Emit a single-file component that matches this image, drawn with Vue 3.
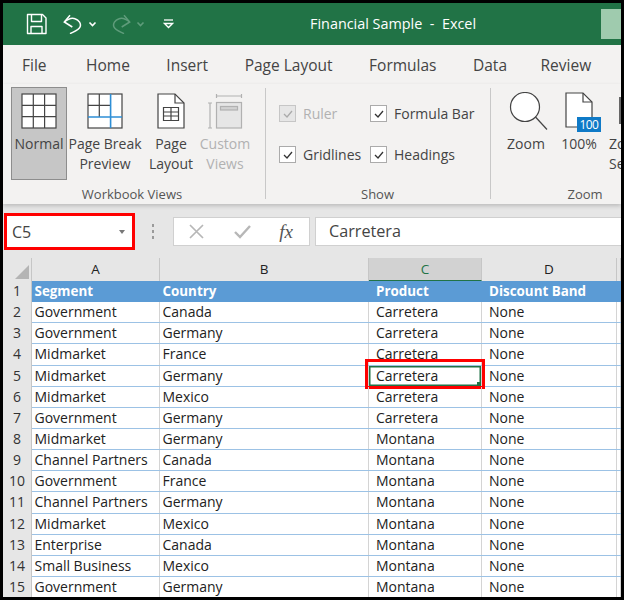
<template>
  <div class="frame">
    <div class="window">
      <header class="titlebar">
        <div class="qat">
          <svg class="ic-save" width="22" height="22" viewBox="0 0 22 22" fill="none" stroke="#fff" stroke-width="1.4" stroke-linejoin="round">
            <path d="M1.500 1.500h15l3.500 3.500v15.500h-18.500z" />
            <path d="M5.500 1.500v7h10v-7" />
            <path d="M5 20.500v-7h11v7" />
          </svg>
          <svg class="ic-undo" width="20" height="20" viewBox="0 0 20 20" fill="none" stroke="#fff" stroke-width="1.5">
            <path d="M1.300 8C5 5 9 3.500 12 4.700C16 6 18.500 10 17 13C16 16 10 18 7 19.700" />
            <path d="M7 1.300L1.300 8L9.300 13" />
          </svg>
          <svg class="chev" width="9" height="6" viewBox="0 0 9 6" fill="none" stroke="#fff" stroke-width="1.600"><path d="M1.500 1.500l3 3 3-3" /></svg>
          <svg class="ic-redo" width="20" height="20" viewBox="0 0 20 20" fill="none" stroke="#5f9c7b" stroke-width="1.5">
            <path d="M18.700 8C15 5 11 3.500 8 4.700C4 6 1.500 10 3 13C4 16 10 18 13 19.700" />
            <path d="M13 1.300L18.700 8L10.700 13" />
          </svg>
          <svg class="chev" width="9" height="6" viewBox="0 0 9 6" fill="none" stroke="#5f9c7b" stroke-width="1.600"><path d="M1.500 1.500l3 3 3-3" /></svg>
          <svg class="ic-custom" width="11" height="10" viewBox="0 0 11 10" fill="none" stroke="#fff" stroke-width="1.300">
            <path d="M1 1h9" />
            <path d="M1.500 4.500l4 4 4-4z" />
          </svg>
        </div>
        <div class="doc-title">Financial Sample&nbsp; -&nbsp; Excel</div>
        <div class="avatar"></div>
      </header>

      <nav class="tabs">
        <span v-for="tab in tabs" :key="tab">{{ tab }}</span>
      </nav>

      <section class="ribbon">
        <div class="group group-views">
          <div class="group-body">
            <div class="view-btn pressed w-normal">
              <svg width="36" height="36" viewBox="0 0 36 36" fill="#fff" stroke="#444" stroke-width="1.200">
                <rect x="1" y="1" width="34" height="34" />
                <path d="M12.300 1v34M23.600 1v34M1 12.300h34M1 23.600h34" fill="none" />
              </svg>
              <span>Normal</span>
            </div>
            <div class="view-btn w-break">
              <svg width="36" height="36" viewBox="0 0 36 36" fill="#fff" stroke="#444" stroke-width="1.200">
                <rect x="1" y="1" width="34" height="34" />
                <path d="M12.300 1v23M1 12.300h23" fill="none" />
                <path d="M23.600 1v34M1 24h34" fill="none" stroke="#2e8fd6" stroke-width="1.600" />
              </svg>
              <span>Page Break<br />Preview</span>
            </div>
            <div class="view-btn w-layout">
              <svg width="28" height="36" viewBox="0 0 28 36" fill="#fff" stroke="#444" stroke-width="1.200">
                <path d="M1 1h17l9 9v25H1z" />
                <path d="M18 1v9h9" fill="none" />
                <path d="M6.500 14.500h15v13h-15zM6.500 19h15M6.500 23h15M14 14.500v13" fill="none" />
              </svg>
              <span>Page<br />Layout</span>
            </div>
            <div class="view-btn disabled w-custom">
              <svg width="36" height="36" viewBox="0 0 36 36" fill="none" stroke="#b1b1b1" stroke-width="1.200">
                <path d="M9.500 3h25M9.500 1v4M34.500 1v4" />
                <path d="M1 10h4M3 10v25M1 35h4" />
                <rect x="9.500" y="9.500" width="25" height="25.500" fill="#e6e6e6" />
                <rect x="13.500" y="13.500" width="17" height="3.500" fill="#d2d2d2" />
              </svg>
              <span>Custom<br />Views</span>
            </div>
          </div>
          <div class="group-label">Workbook Views</div>
        </div>

        <div class="group group-show">
          <div class="show-grid">
            <label v-for="opt in showOptions" :key="opt.label" class="check" :class="{ disabled: opt.disabled }">
              <span class="box">
                <svg width="10" height="8" viewBox="0 0 10 8" fill="none" stroke="currentColor" stroke-width="1.300"><path d="M1 4l3 3 5-6" /></svg>
              </span>
              {{ opt.label }}
            </label>
          </div>
          <div class="group-label">Show</div>
        </div>

        <div class="group group-zoom">
          <div class="group-body">
            <div class="view-btn w-zoom">
              <svg width="40" height="40" viewBox="0 0 40 40" fill="none" stroke="#444" stroke-width="1.200">
                <circle cx="17" cy="15" r="14.500" fill="#fff" />
                <path d="M27.500 25L39 37.500" />
              </svg>
              <span>Zoom</span>
            </div>
            <div class="view-btn w-hundred">
              <div class="page-icon">
                <svg width="28" height="36" viewBox="0 0 28 36" fill="#fff" stroke="#444" stroke-width="1.200">
                  <path d="M1 1h17l9 9v25H1z" />
                  <path d="M18 1v9h9" fill="none" />
                </svg>
                <span class="badge">100</span>
              </div>
              <span>100%</span>
            </div>
            <div class="view-btn w-sel">
              <div class="sel-icon"></div>
              <span>Zoom to<br />Selection</span>
            </div>
          </div>
          <div class="group-label">Zoom</div>
        </div>
      </section>

      <section class="formula-row">
        <div class="name-box">
          <span>C5</span>
          <i class="caret"></i>
        </div>
        <div class="grip"><i></i><i></i><i></i></div>
        <div class="fx-buttons">
          <svg width="17" height="17" viewBox="0 0 17 17" fill="none" stroke="#b7b7b7" stroke-width="1.700"><path d="M2 2l13 13M15 2L2 15" /></svg>
          <svg width="17" height="14" viewBox="0 0 17 14" fill="none" stroke="#b7b7b7" stroke-width="2.400"><path d="M1 7l5 5L16 1" /></svg>
          <span class="fx">fx</span>
        </div>
        <div class="formula-input">Carretera</div>
      </section>

      <section class="sheet">
        <div class="row heads">
          <div class="corner"><i></i></div>
          <div v-for="col in columns" :key="col" class="col-head" :class="{ current: col === 'C' }">{{ col }}</div>
          <div class="col-head"></div>
        </div>
        <div
          v-for="(row, i) in rows"
          :key="i"
          class="row"
          :class="{ first: i === 0 }"
        >
          <div class="row-head">{{ i + 1 }}</div>
          <div v-for="(cell, j) in row" :key="j" class="cell" :class="{ selected: i === 4 && j === 2, indent: j > 1 }">
            {{ cell }}
            <template v-if="i === 4 && j === 2">
              <i class="handle"></i>
              <i class="red-mark"></i>
            </template>
          </div>
          <div class="cell"></div>
        </div>
      </section>
    </div>
  </div>
</template>

<script setup>
const tabs = ["File", "Home", "Insert", "Page Layout", "Formulas", "Data", "Review"];
const columns = ["A", "B", "C", "D"];

const showOptions = [
  { label: "Ruler", disabled: true },
  { label: "Gridlines" },
  { label: "Formula Bar" },
  { label: "Headings" },
];

const rows = [
  ["Segment", "Country", "Product", "Discount Band"],
  ["Government", "Canada", "Carretera", "None"],
  ["Government", "Germany", "Carretera", "None"],
  ["Midmarket", "France", "Carretera", "None"],
  ["Midmarket", "Germany", "Carretera", "None"],
  ["Midmarket", "Mexico", "Carretera", "None"],
  ["Government", "Germany", "Carretera", "None"],
  ["Midmarket", "Germany", "Montana", "None"],
  ["Channel Partners", "Canada", "Montana", "None"],
  ["Government", "France", "Montana", "None"],
  ["Channel Partners", "Germany", "Montana", "None"],
  ["Midmarket", "Mexico", "Montana", "None"],
  ["Enterprise", "Canada", "Montana", "None"],
  ["Small Business", "Mexico", "Montana", "None"],
  ["Government", "Germany", "Montana", "None"],
];
</script>

<style>
html,
body {
  margin: 0;
  background: #000;
}
</style>

<style scoped>
.frame {
  width: 624px;
  height: 600px;
  box-sizing: border-box;
  padding: 3px;
  background: #000;
  overflow: hidden;
  font-family: "Open Sans", "Noto Sans", sans-serif;
  color: #444;
}

.window {
  height: 100%;
  background: #e6e6e6;
  overflow: hidden;
  display: flex;
  flex-direction: column;
}

.titlebar {
  height: 42px;
  flex: none;
  background: #217346;
  display: flex;
  align-items: center;
  color: #fff;
  box-sizing: border-box;
}

.qat {
  width: 307px;
  flex: none;
  display: flex;
  align-items: center;
  padding-left: 23px;
  box-sizing: border-box;
}

.ic-save {
  margin-right: 15px;
}

.chev {
  margin-left: 4.500px;
  margin-right: 14.500px;
}

.ic-custom {
  margin-left: 3.500px;
}

.doc-title {
  flex: 1;
  font-size: 14.400px;
  white-space: nowrap;
  margin-top: -2px;
}

.avatar {
  width: 20px;
  height: 30px;
  background: #9fcbae;
}

.tabs {
  height: 39px;
  flex: none;
  background: #f3f2f1;
  display: flex;
  align-items: center;
  gap: 36.500px;
  padding-left: 19px;
  font-size: 15.500px;
  color: #444;
  white-space: nowrap;
}

.tabs span:first-child {
  margin-right: 3px;
}

.tabs span:last-child {
  margin-left: -3px;
}

.ribbon {
  height: 120px;
  flex: none;
  background: #f3f2f1;
  display: flex;
  box-shadow: 0 2px 4px rgba(0, 0, 0, 0.18);
  position: relative;
  overflow: hidden;
}

.group {
  flex: none;
  display: flex;
  flex-direction: column;
  box-sizing: border-box;
  margin-bottom: 5px;
}

.group + .group {
  border-left: 1px solid #c8c8c8;
  margin-top: 4px;
}

.group-views {
  width: 262px;
  padding-left: 8px;
}

.group-show {
  width: 225px;
  padding-left: 13px;
}

.group-zoom {
  flex: 1;
  min-width: 0;
  padding-left: 10px;
}

.group-body {
  flex: 1;
  display: flex;
  align-items: flex-start;
  padding-top: 3px;
}

.group-label {
  height: 10px;
  line-height: 10px;
  text-align: center;
  font-size: 13px;
  color: #555;
  white-space: nowrap;
}

.group-views .group-label {
  padding-right: 12px;
}

.group-show .group-label {
  padding-right: 14px;
}

.group-zoom .group-label {
  padding-left: 48px;
}

.view-btn {
  display: flex;
  flex-direction: column;
  align-items: center;
  flex: none;
  box-sizing: border-box;
  height: 93px;
  padding-top: 6px;
  font-size: 14px;
  line-height: 20px;
  text-align: center;
  white-space: nowrap;
  color: #444;
}

.view-btn > span {
  margin-top: 5px;
}

.view-btn.pressed {
  background: #c6c6c6;
  border: 1px solid #8d8d8d;
  padding-top: 5px;
}

.view-btn.disabled {
  color: #b1b1b1;
}

.w-normal {
  width: 56px;
}

.w-break {
  width: 76px;
}

.w-layout {
  width: 56px;
}

.w-custom {
  width: 52px;
}

.show-grid {
  flex: 1;
  display: grid;
  grid-template-columns: 91px auto;
  grid-template-rows: 41px 41px;
  grid-auto-flow: column;
  align-items: center;
  padding-top: 5px;
  font-size: 14px;
  white-space: nowrap;
}

.check {
  display: flex;
  align-items: center;
  gap: 7px;
}

.check.disabled {
  color: #b1b1b1;
}

.box {
  width: 15px;
  height: 15px;
  background: #fff;
  border: 1px solid #ababab;
  display: flex;
  align-items: center;
  justify-content: center;
  color: #333;
}

.check.disabled .box {
  background: #e6e6e6;
  border-color: #c6c6c6;
  color: #aaa;
}

.group-zoom .group-body {
  padding-top: 0;
}

.group-zoom .view-btn {
  padding-top: 4px;
}

.w-zoom {
  width: 50px;
  margin-right: 3px;
}

.w-zoom svg {
  margin-left: 3px;
}

.w-hundred {
  width: 50px;
}

.w-sel {
  width: 60px;
  margin-left: 5px;
  align-items: flex-start;
  text-align: left;
}

.page-icon {
  position: relative;
  height: 40px;
  width: 36px;
  margin-left: 8px;
}

.page-icon svg {
  display: block;
}

.w-zoom span,
.w-hundred > span,
.w-sel > span {
  margin-top: 2px;
}

.badge {
  position: absolute;
  right: 0;
  bottom: 0;
  width: 24px;
  height: 15px;
  background: #0f7ac7;
  color: #fff;
  font-size: 12px;
  line-height: 15px;
  text-align: center;
  letter-spacing: -0.6px;
}

.sel-icon {
  width: 30px;
  height: 27px;
  margin-top: 5px;
  margin-bottom: 8px;
  margin-left: 10px;
  border-left: 3px solid #666;
}

.formula-row {
  flex: none;
  height: 54px;
  display: flex;
  align-items: center;
  padding-top: 4px;
  padding-bottom: 3px;
  box-sizing: border-box;
}

.name-box {
  width: 131px;
  height: 37px;
  flex: none;
  margin-left: 1px;
  box-sizing: border-box;
  border: 3px solid #f00;
  background: #fff;
  display: flex;
  align-items: center;
  justify-content: space-between;
  padding: 0 7px 0 5px;
  font-size: 16px;
  color: #444;
}

.caret {
  width: 0;
  height: 0;
  border-left: 3.500px solid transparent;
  border-right: 3.500px solid transparent;
  border-top: 4px solid #777;
}

.grip {
  width: 36px;
  margin-right: 2px;
  flex: none;
  display: flex;
  flex-direction: column;
  align-items: center;
  gap: 3px;
}

.grip i {
  width: 2px;
  height: 3px;
  background: #9a9a9a;
}

.fx-buttons {
  width: 137px;
  height: 29px;
  flex: none;
  box-sizing: border-box;
  background: #fff;
  border: 1px solid #d0d0d0;
  display: flex;
  align-items: center;
  justify-content: space-between;
  padding: 0 16px 0 14px;
  margin-right: 5px;
}

.fx {
  font-family: "Liberation Serif", serif;
  font-style: italic;
  font-size: 19px;
  color: #555;
}

.formula-input {
  flex: 1;
  height: 29px;
  box-sizing: border-box;
  background: #fff;
  border: 1px solid #d0d0d0;
  border-right: 0;
  padding-left: 13px;
  line-height: 27px;
  font-size: 16.200px;
  color: #444;
}

.sheet {
  flex: 1;
  background: #fff;
  font-size: 14px;
  color: #222;
}

.row {
  display: grid;
  grid-template-columns: 29px 128px 209px 113px 135px 1fr;
  height: 21.150px;
  box-sizing: border-box;
  border-bottom: 1px solid #9cc2e5;
  line-height: 20px;
  white-space: nowrap;
}

.heads {
  height: 23px;
  border-bottom: 0;
  background: #e6e6e6;
  line-height: 22px;
}

.corner {
  position: relative;
  border-right: 1px solid #c6c6c6;
}

.corner i {
  position: absolute;
  right: 2px;
  bottom: 2px;
  width: 0;
  height: 0;
  border-left: 14px solid transparent;
  border-bottom: 14px solid #b4b4b4;
}

.col-head {
  text-align: center;
  font-size: 13.500px;
  border-right: 1px solid #c6c6c6;
  color: #222;
}

.col-head.current {
  background: #d2d2d2;
  border-bottom: 1px solid #217346;
  color: #217346;
}

.row-head {
  background: #e6e6e6;
  border-right: 1px solid #c6c6c6;
  text-align: center;
  color: #333;
  margin-bottom: -1px;
}

.cell {
  position: relative;
  padding-left: 2.500px;
  border-right: 1px solid #d4d4d4;
}

.cell.indent {
  padding-left: 7px;
}

.first .cell {
  background: #5b9bd5;
  color: #fff;
  font-weight: 700;
  font-size: 13.400px;
  border-right: 0;
  margin-bottom: -1px;
}

.selected {
  box-shadow: inset 0 0 0 1.500px #217346;
}

.handle {
  position: absolute;
  right: 0;
  bottom: 0;
  width: 4px;
  height: 4px;
  background: #217346;
}

.red-mark {
  position: absolute;
  left: -4px;
  right: -4px;
  top: -7px;
  bottom: -3px;
  border: 3px solid #f00;
}
</style>
